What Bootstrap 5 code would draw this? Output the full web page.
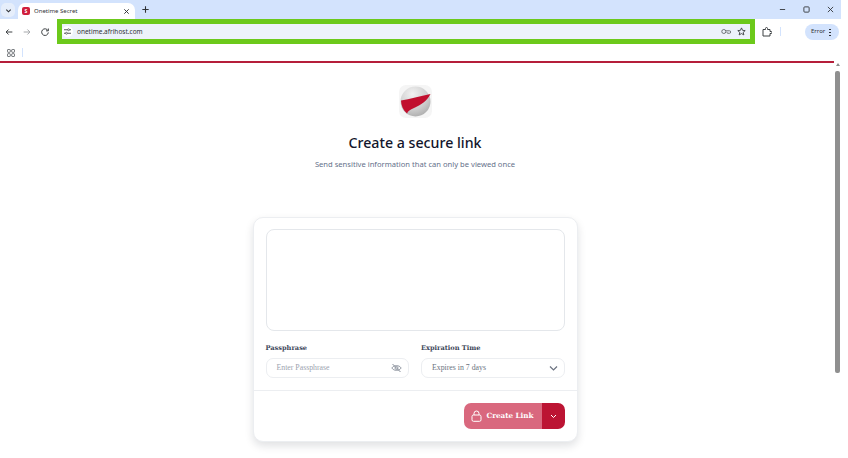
<!DOCTYPE html>
<html lang="en">
<head>
  <meta charset="UTF-8" />
  <meta name="viewport" content="width=device-width, initial-scale=1.0" />
  <title>Onetime Secret</title>
  <link href="https://cdn.jsdelivr.net/npm/bootstrap@5.3.0/dist/css/bootstrap.min.css" rel="stylesheet" />
  <style>
    html, body { height: 458px; overflow: hidden; background: #fff; }
    body { font-family: "Noto Sans", sans-serif; color: #111827; }
    .shot { width: 841px; height: 458px; overflow: hidden; }
    .tabstrip { height: 19px; background: #d3e3fd; padding-left: 1px; }
    .tab-menu { width: 14px; height: 14px; margin-top: 3px; border-radius: 5px; background: #e6eefb; }
    .chrome-tab { width: 117px; height: 16px; margin-top: 3px; margin-left: 3px; padding: 0 5px 0 4px; background: #fff; border-radius: 7px 7px 0 0; font-size: 6px; color: #303236; }
    .favicon { width: 8px; height: 8px; margin-right: 4px; border-radius: 2px; background: #d01f3c; color: #fff; font-size: 5px; line-height: 8px; text-align: center; font-weight: 700; }
    .new-tab { margin: 5px 0 0 6px; }
    .win-btns { gap: 17px; padding-right: 7px; }
    .toolbar { height: 25px; padding: 0 2px 0 3px; }
    .tool-icon { width: 10px; height: 10px; display: block; }
    .nav-icons { gap: 8px; width: 54px; padding-left: 1px; }
    .omnibox { width: 698px; height: 25px; border: 5px solid #6cc91b; background: #edf2fa; font-size: 6.5px; color: #303236; padding: 0 4px 0 0; }
    .site-chip { width: 11px; height: 11px; margin-right: 4px; border-radius: 50%; background: #fff; }
    .key-icon { margin-right: 6px; }
    .right-tools { width: 84px; padding-left: 7px; }
    .divider { width: 1px; height: 9px; background: #d3e3fd; }
    .tool-divider { margin-left: 8px; }
    .error-pill { width: 34px; height: 16px; margin-left: auto; border-radius: 8px; background: #d3e3fd; font-size: 6px; padding: 0 8px 0 6px; color: #303236; }
    .dots { width: 2px; height: 8px; background: radial-gradient(circle, #303236 1px, transparent 1.1px) 0 0 / 2px 3px; }
    .bookmarks { height: 17px; padding-left: 7px; gap: 7px; }
    .pagewrap { height: 397px; }
    .page-main { width: 834px; padding-right: 4px; border-top: 2px solid #b51e3a; }
    .sbar { width: 7px; background: #fff; padding-top: 2px; }
    .sbar-arrow { width: 0; height: 0; margin: 0 auto 5px; border: 2.5px solid transparent; border-top: 0; border-bottom: 3px solid #8b8b8b; }
    .sbar-thumb { width: 5px; height: 302px; margin: 0 auto; background: #8f8f8f; border-radius: 2px; }
    .logo-tile { width: 33px; height: 33px; margin-top: 22px; border-radius: 7px; background: #f5f5f5; }
    .hero-title { font-size: 14.2px; line-height: 20px; font-weight: 500; color: #12152b; margin: 15px 0 0; }
    .hero-sub { font-size: 7.6px; line-height: 12px; color: #64708a; margin: 5px 0 0; }
    .form-panel { width: 325px; height: 225px; margin-top: 47px; border: 1px solid #eceef1; border-radius: 10px; background: #fff; box-shadow: 0 4px 8px rgba(17, 24, 39, .13); }
    .secret-box { height: 102px; margin: 11px 12px 0; border: 1px solid #e4e7eb; border-radius: 8px; }
    .field-row { gap: 12px; margin: 12px 12px 0; }
    .field-col { flex: 1 1 0; }
    .field-label { font-family: "DejaVu Serif", serif; font-size: 6.6px; font-weight: 700; line-height: 10px; color: #3c4658; margin-bottom: 5px; }
    .field-box { height: 20px; border: 1px solid #eceef1; border-radius: 7px; padding: 0 6px 0 10px; font-family: "Liberation Serif", serif; font-size: 7.8px; color: #9ca3af; }
    .field-select { color: #6b7280; }
    .panel-foot { height: 50px; margin-top: 12px; border-top: 1px solid #eceef1; padding: 12px 12px 0 0; }
    .create-main { width: 78px; height: 26px; background: #d9687e; color: #fff; border-radius: 7px 0 0 7px; font-family: "DejaVu Serif", serif; font-weight: 700; font-size: 7.2px; gap: 4px; }
    .create-drop { width: 23px; height: 26px; background: #bc1433; border-radius: 0 7px 7px 0; }
  </style>
</head>
<body>
  <div class="shot d-flex flex-column">
    <div class="tabstrip d-flex justify-content-between">
      <div class="d-flex">
        <div class="tab-menu d-flex align-items-center justify-content-center">
          <svg width="7" height="7" viewBox="0 0 8 8"><path d="M1.5 3 4 5.5 6.5 3" fill="none" stroke="#303236" stroke-width="1.3"/></svg>
        </div>
        <div class="chrome-tab d-flex align-items-center">
          <span class="favicon flex-shrink-0">S</span>
          <span class="flex-grow-1">Onetime Secret</span>
          <svg width="7" height="7" viewBox="0 0 8 8"><path d="M1.5 1.5 6.5 6.5M6.5 1.5 1.5 6.5" stroke="#303236" stroke-width="1.1"/></svg>
        </div>
        <svg class="new-tab" width="9" height="9" viewBox="0 0 10 10"><path d="M5 1.500v7M1.500 5h7" stroke="#303236" stroke-width="1.200"/></svg>
      </div>
      <div class="d-flex align-items-center win-btns">
        <svg width="7" height="7" viewBox="0 0 8 8"><path d="M1 4h6" stroke="#303236"/></svg>
        <svg width="7" height="7" viewBox="0 0 8 8"><rect x="1" y="1" width="6" height="6" rx="1" fill="none" stroke="#303236"/></svg>
        <svg width="7" height="7" viewBox="0 0 8 8"><path d="M1 1 7 7M7 1 1 7" stroke="#303236"/></svg>
      </div>
    </div>

    <div class="toolbar d-flex align-items-center">
      <div class="nav-icons d-flex align-items-center">
        <svg class="tool-icon" viewBox="0 0 12 12"><path d="M10 6H2.500M5.500 3 2.500 6l3 3" fill="none" stroke="#3c4043" stroke-width="1.200"/></svg>
        <svg class="tool-icon" viewBox="0 0 12 12"><path d="M2 6h7.500M6.500 3l3 3-3 3" fill="none" stroke="#a6a8ab" stroke-width="1.200"/></svg>
        <svg class="tool-icon" viewBox="0 0 12 12"><path d="M9.500 4.200A4 4 0 1 0 10 6.500M10 1.800v2.800H7.200" fill="none" stroke="#3c4043" stroke-width="1.200"/></svg>
      </div>
      <div class="omnibox d-flex align-items-center">
        <span class="site-chip d-flex align-items-center justify-content-center">
          <svg width="7" height="7" viewBox="0 0 8 8"><path d="M0 2h4M6.500 2H8M0 6h1.500M4 6h4" stroke="#3c4043"/><circle cx="5.200" cy="2" r="1.100" fill="none" stroke="#3c4043" stroke-width=".8"/><circle cx="2.800" cy="6" r="1.100" fill="none" stroke="#3c4043" stroke-width=".8"/></svg>
        </span>
        <span class="flex-grow-1">onetime.afrihost.com</span>
        <svg class="key-icon" width="10" height="7" viewBox="0 0 11 8"><circle cx="3" cy="4" r="2.300" fill="none" stroke="#5f6368" stroke-width="1"/><path d="M5.300 3.200H9.500a1.300 1.300 0 0 1 0 2.800H7.500a1.300 1.300 0 0 1-1-1.400" fill="none" stroke="#5f6368" stroke-width="1"/></svg>
        <svg width="9" height="9" viewBox="0 0 10 10"><path d="M5 1l1.200 2.700 2.900.3-2.200 1.900.7 2.900L5 7.300 2.400 8.800l.7-2.900L.9 4l2.900-.3z" fill="none" stroke="#3c4043"/></svg>
      </div>
      <div class="right-tools d-flex align-items-center">
        <svg width="10" height="10" viewBox="0 0 10 10"><path d="M1 2.500h2.500V1.500a1 1 0 0 1 2 0v1H8V4.500h1a1 1 0 0 1 0 2H8V9H1z" fill="none" stroke="#3c4043"/></svg>
        <span class="divider tool-divider"></span>
        <span class="error-pill d-flex align-items-center justify-content-between"><span>Error</span><span class="dots"></span></span>
      </div>
    </div>

    <div class="bookmarks d-flex align-items-center">
      <svg width="8" height="8" viewBox="0 0 8 8"><g fill="none" stroke="#5f6368" stroke-width=".9"><rect x=".5" y=".5" width="2.800" height="2.800" rx=".6"/><rect x="4.700" y=".5" width="2.800" height="2.800" rx=".6"/><rect x=".5" y="4.700" width="2.800" height="2.800" rx=".6"/><rect x="4.700" y="4.700" width="2.800" height="2.800" rx=".6"/></g></svg>
      <span class="divider"></span>
    </div>

    <div class="pagewrap d-flex">
      <main class="page-main d-flex flex-column align-items-center">
        <div class="logo-tile d-flex align-items-center justify-content-center">
          <svg width="31" height="31" viewBox="0 0 31 31">
            <defs><radialGradient id="ball" cx=".4" cy=".25" r=".85"><stop offset="0" stop-color="#f2f2f2"/><stop offset=".6" stop-color="#cdcdcd"/><stop offset="1" stop-color="#a6a6a6"/></radialGradient></defs>
            <circle cx="15.500" cy="15.500" r="15" fill="url(#ball)"/>
            <path d="M1 14.500C10 13 20 10 30.500 8 27 15 21 19 14 22 10 24 8 25 7 27.500 3 24 1 19 1 14.500z" fill="#c10f2e"/>
          </svg>
        </div>
        <h1 class="hero-title">Create a secure link</h1>
        <p class="hero-sub">Send sensitive information that can only be viewed once</p>
        <section class="form-panel">
          <div class="secret-box"></div>
          <div class="field-row d-flex">
            <div class="field-col">
              <div class="field-label">Passphrase</div>
              <div class="field-box d-flex align-items-center justify-content-between">
                <span>Enter Passphrase</span>
                <svg width="11" height="10" viewBox="0 0 11 10"><path d="M.8 5C3 1.800 8 1.800 10.200 5 8 8.200 3 8.200.8 5z" fill="none" stroke="#8a919c" stroke-width=".9"/><circle cx="5.500" cy="5" r="1.500" fill="none" stroke="#8a919c" stroke-width=".9"/><path d="M1.500 1 9.500 9" stroke="#8a919c" stroke-width="1"/></svg>
              </div>
            </div>
            <div class="field-col">
              <div class="field-label">Expiration Time</div>
              <div class="field-box field-select d-flex align-items-center justify-content-between">
                <span>Expires in 7 days</span>
                <svg width="9" height="7" viewBox="0 0 9 7"><path d="M1 1.500 4.500 5 8 1.500" fill="none" stroke="#6b7280" stroke-width="1.200"/></svg>
              </div>
            </div>
          </div>
          <div class="panel-foot d-flex justify-content-end">
            <div class="create-main d-flex align-items-center justify-content-center">
              <svg width="11" height="12" viewBox="0 0 11 12"><rect x="1" y="5" width="9" height="6.300" rx="1.500" fill="none" stroke="#fff" stroke-width="1"/><path d="M3 5V3.500a2.500 2.500 0 0 1 5 0V5" fill="none" stroke="#fff" stroke-width="1"/></svg>
              <span>Create Link</span>
            </div>
            <div class="create-drop d-flex align-items-center justify-content-center">
              <svg width="7" height="5" viewBox="0 0 7 5"><path d="M1 1 3.500 3.500 6 1" fill="none" stroke="#fff"/></svg>
            </div>
          </div>
        </section>
      </main>
      <div class="sbar">
        <div class="sbar-arrow"></div>
        <div class="sbar-thumb"></div>
      </div>
    </div>
  </div>
  <script src="https://cdn.jsdelivr.net/npm/bootstrap@5.3.0/dist/js/bootstrap.bundle.min.js"></script>
</body>
</html>
